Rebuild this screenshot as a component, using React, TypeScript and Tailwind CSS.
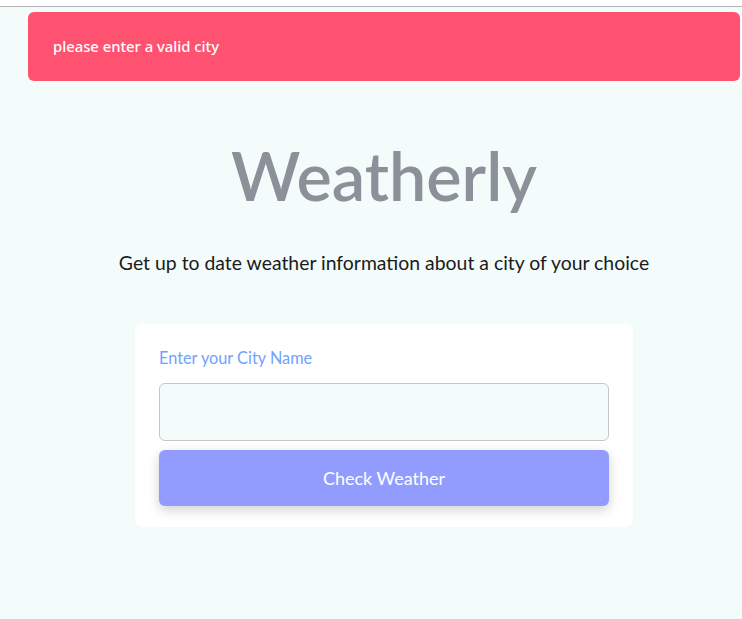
import React from "react";

export default function App() {
  return (
    <div className="w-[742px] h-[619px] overflow-hidden bg-[#f3fcfa]">
      <div className="w-[768px]">
        <div className="h-[6px] bg-white border-b border-[#b3b3b3] box-content" />
        <div className="px-[28px] pt-[5px]">
          <div className="h-[69px] rounded-[6px] bg-[#ff5170] flex items-center pl-[25px] text-white text-[14.8px] font-medium font-['Noto_Sans',sans-serif]">
            please enter a valid city
          </div>
        </div>
        <div className="flex flex-col items-center font-['Lato',sans-serif]">
          <h1 className="mt-[50px] text-[66.5px] leading-[88px] text-[#8c9099] font-semibold">Weatherly</h1>
          <p className="mt-[31px] text-[19.4px] leading-[26px] text-[#1a1a1a]">
            Get up to date weather information about a city of your choice
          </p>
          <div className="mt-[48px] w-[498px] bg-white rounded-[7px] px-[24px] pt-[24px] pb-[21px]">
            <div className="text-[16.3px] leading-[20px] text-[#70a2ff]">Enter your City Name</div>
            <div className="mt-[15px] h-[58px] rounded-[6px] border border-[#c6c6c6] bg-[#f3fcfa]" />
            <button className="mt-[9px] w-full h-[56px] rounded-[6px] bg-[#929cff] text-white text-[18px] shadow-[0_4px_12px_rgba(0,0,0,0.18)]">
              Check Weather
            </button>
          </div>
        </div>
      </div>
    </div>
  );
}
